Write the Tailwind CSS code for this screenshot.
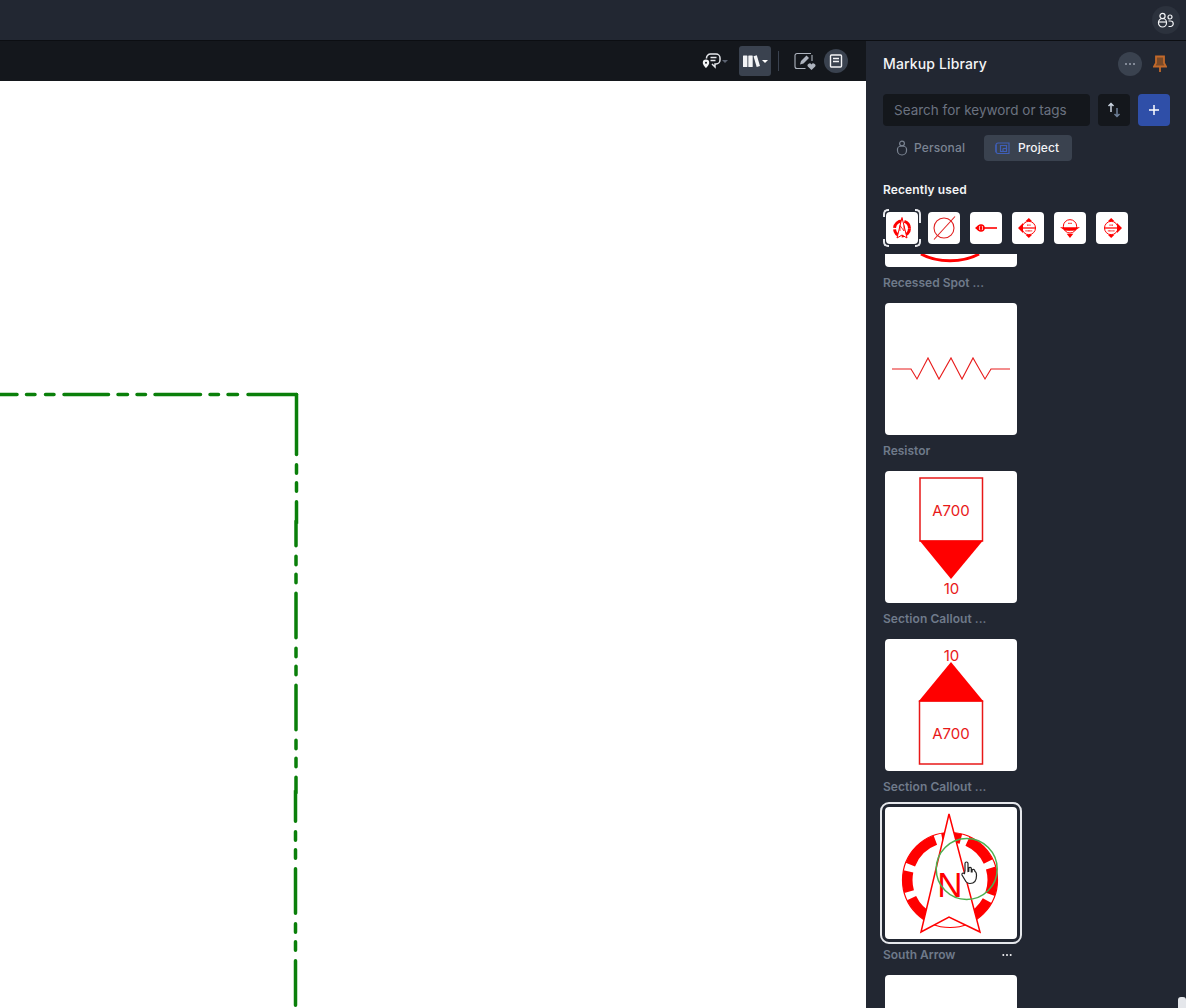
<!DOCTYPE html>
<html lang="en">
<head>
    <meta charset="UTF-8">
    <title>Markup Library</title>
    <script src="https://cdn.jsdelivr.net/npm/@tailwindcss/browser@4"></script>
</head>
<body class="h-[1008px] w-[1186px] overflow-hidden bg-white font-['Inter',sans-serif]">
    <!-- top bar -->
    <div class="flex h-[41px] items-center justify-end border-b border-[#0c0e12] bg-[#222732] pr-[6px]">
        <div class="flex h-[28px] w-[28px] items-center justify-center rounded-full bg-[#2c323d]">
            <svg width="18" height="16" viewBox="0 0 18 16" fill="none" stroke="#f3f4f6" stroke-width="1.2">
                <circle cx="5.5" cy="4" r="2.6"/>
                <path d="M1.5 10.5a4 4 0 0 1 8 0v.5a4 4 0 0 1-8 0z"/>
                <path d="M1.5 10h8" />
                <circle cx="13" cy="5" r="2"/>
                <path d="M11.5 9h2a2.5 2.5 0 0 1 0 5.5h-2"/>
            </svg>
        </div>
    </div>

    <div class="flex h-[967px]">
        <!-- viewer -->
        <div class="flex w-[866px] flex-col">
            <div class="flex h-[40px] items-center justify-end bg-[#14171c]">
                <svg width="19" height="16" viewBox="0 0 19 16" fill="none" class="mr-[1px]">
                    <path d="M4.500 5.500V5a4 4 0 0 1 4-4h5.500a4 4 0 0 1 4 4v2a4 4 0 0 1-4 4h-1v3l-3-3" stroke="#e5e7eb" stroke-width="1.500"/>
                    <path d="M8.500 4.500h6M8.500 7.500h5" stroke="#e5e7eb" stroke-width="1.400"/>
                    <path d="M4 6.500a3.200 3.200 0 0 1 3.200 3.200C7.200 12 4 15 4 15S.8 12 .8 9.700A3.200 3.200 0 0 1 4 6.500z" fill="#f3f4f6"/>
                    <circle cx="4" cy="9.700" r="1" fill="#14171c"/>
                </svg>
                <span class="mr-[11px] h-0 w-0 border-x-[3px] border-t-[3px] border-x-transparent border-t-[#5b6270]"></span>
                <div class="mr-[7px] flex h-[30px] w-[32px] items-center justify-center gap-[2px] rounded-[3px] bg-[#3a424f]">
                    <svg width="17" height="12" viewBox="0 0 17 12" fill="#f3f4f6">
                        <rect x="0" y="0.500" width="4.400" height="11.500" rx="0.500"/>
                        <rect x="5.300" y="0.500" width="4.400" height="11.500" rx="0.500"/>
                        <path d="M10.500 1.200l3.300-.9 3.200 10.700-3.300.9z"/>
                    </svg>
                    <span class="h-0 w-0 border-x-[3px] border-t-[3px] border-x-transparent border-t-white"></span>
                </div>
                <span class="mr-[15px] h-[20px] w-px bg-[#3a424f]"></span>
                <svg width="22" height="19" viewBox="0 0 22 19" fill="none" class="mr-[8px]">
                    <path d="M17 1.500H3a2 2 0 0 0-2 2v11a2 2 0 0 0 2 2h8.500M18 3v6" stroke="#aeb4be" stroke-width="1.100"/>
                    <path d="M6 12.500l1-3.500 5.500-5.500 2.500 2.500-5.500 5.500z" fill="#aeb4be"/>
                    <path d="M17.500 18l-3.700-3.500a2.100 2.100 0 0 1 3.700-2 2.100 2.100 0 0 1 3.700 2z" fill="#aeb4be"/>
                </svg>
                <div class="mr-[18px] flex h-[24px] w-[24px] items-center justify-center rounded-full bg-[#3a424f]">
                    <svg width="14" height="14" viewBox="0 0 14 14" fill="none" stroke="#f3f4f6" stroke-width="1.400">
                        <rect x="1.500" y="1" width="11" height="12" rx="1"/>
                        <path d="M4 4.500h6M4 7.500h6"/>
                    </svg>
                </div>
            </div>
            <!-- drawing -->
            <svg width="866" height="927" viewBox="0 81 866 927" fill="none" stroke="#0a7f0a" stroke-width="3.500" stroke-linecap="round">
                <path d="M296.500 394.500H0" stroke-dasharray="48.500 10.500 9.500 9.500 8.500 9.500 45.500 9.500 8.500 9.500 9.500 9.500 44.500 10 8.500 10.500 8.500 9.500 20"/>
                <path d="M296.500 394.500V454.500"/>
                <path d="M296.500 464.750L296.500 522L296 522L296 792L295.500 792L295.500 1010" stroke-dasharray="8.500 9.500 8.500 10.500 44.500 10.500"/>
            </svg>
        </div>

        <!-- markup library panel -->
        <div class="relative flex w-[320px] flex-col bg-[#222732] text-white">
            <div class="flex h-[46px] items-center pl-[17px] pr-[19px]">
                <h2 class="flex-1 text-[14px] leading-5 font-medium tracking-[0.01em] text-[#f3f4f6]">Markup Library</h2>
                <div class="mr-[11px] flex h-[24px] w-[24px] items-center justify-center rounded-full bg-[#3a424f]">
                    <svg width="10" height="2" viewBox="0 0 10 2" fill="#9ca3af"><circle cx="1" cy="1" r="1"/><circle cx="5" cy="1" r="1"/><circle cx="9" cy="1" r="1"/></svg>
                </div>
                <svg width="14" height="18" viewBox="0 0 14 18" fill="none" stroke="#c2692a" stroke-width="1.800">
                    <path d="M3 1.500h8v6.500l2 3.500H1l2-3.500z" fill="#7a4a28"/>
                    <path d="M7 11.500v5.500"/>
                </svg>
            </div>
            <div class="mt-[7px] flex gap-[8px] pl-[17px]">
                <div class="flex h-[32px] w-[207px] items-center rounded-[4px] bg-[#14171c] pl-[11px] text-[13.5px] text-[#6b7280]">Search for keyword or tags</div>
                <div class="flex h-[32px] w-[32px] items-center justify-center rounded-[4px] bg-[#14171c]">
                    <svg width="14" height="16" viewBox="0 0 14 16" fill="none" stroke-width="1.500">
                        <path d="M4 10V1.500M1.500 4L4 1.500 6.500 4" stroke="#cbd5e1"/>
                        <path d="M10 6v8.500M7.500 12l2.500 2.500 2.500-2.500" stroke="#6f8199"/>
                    </svg>
                </div>
                <div class="flex h-[32px] w-[32px] items-center justify-center rounded-[4px] bg-[#2f4fa8]">
                    <svg width="10" height="10" viewBox="0 0 10 10" stroke="#fff" stroke-width="1.500"><path d="M5 0v10M0 5h10"/></svg>
                </div>
            </div>
            <div class="mt-[9px] flex gap-[9px] pl-[18px]">
                <div class="flex h-[26px] w-[91px] items-center gap-[6px] pl-[12px] text-[12px] font-medium tracking-[0.01em] text-[#7b8492]">
                    <svg width="12" height="16" viewBox="0 0 12 16" fill="none" stroke="#7b8492" stroke-width="1.200">
                        <circle cx="6" cy="3.500" r="2.400"/>
                        <path d="M1.500 9a4.500 3 0 0 1 9 0v1.500a4.500 4.500 0 0 1-9 0z"/>
                    </svg>
                    Personal
                </div>
                <div class="flex h-[26px] w-[88px] items-center gap-[8px] rounded-[4px] bg-[#3a424f] pl-[11px] text-[12px] font-medium tracking-[0.01em] text-[#f3f4f6]">
                    <svg width="15" height="13" viewBox="0 0 15 13" fill="none" stroke="#3f5fb8" stroke-width="1.200">
                        <path d="M1 3A2 2 0 0 1 3 1h11v10.500H3a2 2 0 0 1-2-2z"/>
                        <path d="M1 3v7M5.500 3.500h6v6h-6zM8 6.500h3.500M8 6.500v3"/>
                    </svg>
                    Project
                </div>
            </div>
            <div class="mt-[21px] pl-[17px] text-[12px] leading-4 font-semibold tracking-[0.01em] text-[#f3f4f6]">Recently used</div>

            <!-- recently used thumbs -->
            <div class="relative mt-[14px] flex gap-[10px] pl-[20px]">
                <span class="absolute top-[-3px] left-[17px] h-[8px] w-[6px] rounded-tl-[5px] border-t-2 border-l-2 border-[#e5e7eb]"></span>
                <span class="absolute bottom-[-3px] left-[17px] h-[8px] w-[6px] rounded-bl-[5px] border-b-2 border-l-2 border-[#e5e7eb]"></span>
                <span class="absolute top-[-3px] left-[49px] h-[14px] w-[6px] rounded-tr-[5px] border-t-2 border-r-2 border-[#e5e7eb]"></span>
                <span class="absolute bottom-[-3px] left-[49px] h-[8px] w-[6px] rounded-br-[5px] border-r-2 border-b-2 border-[#e5e7eb]"></span>
                <div class="flex h-[32px] w-[32px] items-center justify-center rounded-[4px] bg-white">
                    <svg width="22" height="24" viewBox="0 0 22 24" fill="none" stroke="#f00">
                        <circle cx="11" cy="12.500" r="7.500" stroke-width="3" stroke-dasharray="12 1.500 9 1.500 12 1.500 9 1.500"/>
                        <path d="M11 1.500L6 22 11 19l5 3z" fill="#fff" stroke-width="1"/>
                        <path d="M9 15V9.500l4 5.500V9.500" stroke-width="0.800"/>
                    </svg>
                </div>
                <div class="flex h-[32px] w-[32px] items-center justify-center rounded-[4px] bg-white">
                    <svg width="26" height="26" viewBox="0 0 26 26" fill="none" stroke="#e02020" stroke-width="1.100">
                        <circle cx="13" cy="13" r="10"/>
                        <path d="M3 24.500L24 1.500"/>
                    </svg>
                </div>
                <div class="flex h-[32px] w-[32px] items-center justify-center rounded-[4px] bg-white">
                    <svg width="22" height="10" viewBox="0 0 22 10" fill="none" stroke="#f00">
                        <circle cx="6" cy="5" r="3" stroke-width="1.500"/>
                        <path d="M0 5l3.500-3v6zM6 1.500l1.500 3.500H4.500zM6 8.500L7.500 5H4.500z" fill="#f00" stroke="none"/>
                        <path d="M8 5h14" stroke-width="1.600"/>
                    </svg>
                </div>
                <div class="flex h-[32px] w-[32px] items-center justify-center rounded-[4px] bg-white">
                    <svg width="20" height="20" viewBox="0 0 24 24" fill="none" stroke="#f00">
                        <path d="M0 12l6-6v12zM13 0L9 4h8zM13 24l-4-4h8z" fill="#f00" stroke="none"/>
                        <circle cx="13" cy="12" r="8" stroke-width="1.200"/>
                        <path d="M4 12h17" stroke-width="1.500"/>
                        <path d="M9 15.500h8M11 8.500h4" stroke-width="1.500" stroke-dasharray="1 0.500"/>
                    </svg>
                </div>
                <div class="flex h-[32px] w-[32px] items-center justify-center rounded-[4px] bg-white">
                    <svg width="20" height="20" viewBox="0 0 24 24" fill="none" stroke="#f00">
                        <path d="M0 11h24l-6 4H6zM12 24l-4-5h8z" fill="#f00" stroke="none"/>
                        <circle cx="12" cy="10" r="8" stroke-width="1.200"/>
                        <path d="M8 14.500h8M10 6.500h4" stroke-width="1.500" stroke-dasharray="1 0.500"/>
                    </svg>
                </div>
                <div class="flex h-[32px] w-[32px] items-center justify-center rounded-[4px] bg-white">
                    <svg width="20" height="20" viewBox="0 0 24 24" fill="none" stroke="#f00">
                        <path d="M24 12l-6-6v12zM11 0L7 4h8zM11 24l-4-4h8z" fill="#f00" stroke="none"/>
                        <circle cx="11" cy="12" r="8" stroke-width="1.200"/>
                        <path d="M3 12h17" stroke-width="1.500"/>
                        <path d="M7 15.500h8M9 8.500h4" stroke-width="1.500" stroke-dasharray="1 0.500"/>
                    </svg>
                </div>
            </div>

            <!-- library list -->
            <div class="mt-[10px] min-h-0 flex-1 overflow-hidden pl-[19px]">
                <div class="mt-[-119px] h-[132px] w-[132px] overflow-hidden rounded-[4px] bg-white">
                    <svg width="132" height="132" viewBox="0 0 132 132" fill="none">
                        <path d="M36 119c16 9 42 9 58 0" stroke="#f00" stroke-width="3"/>
                    </svg>
                </div>
                <div class="mt-[8px] h-[28px] -ml-[2px] text-[12px] leading-[16px] font-semibold text-[#6f7a8a]">Recessed Spot ...</div>

                <div class="h-[132px] w-[132px] rounded-[4px] bg-white">
                    <svg width="132" height="132" viewBox="0 0 132 132" fill="none" stroke="#e81c1c" stroke-width="1.100">
                        <path d="M7 66H26L32 76 43 55 54 76 66 55 77 76 88 55 100 76 106 66H125"/>
                    </svg>
                </div>
                <div class="mt-[8px] h-[28px] -ml-[2px] text-[12px] leading-[16px] font-semibold text-[#6f7a8a]">Resistor</div>

                <div class="h-[132px] w-[132px] rounded-[4px] bg-white">
                    <svg width="132" height="132" viewBox="0 0 132 132">
                        <rect x="35" y="7" width="62.500" height="63" fill="none" stroke="#e81818" stroke-width="1.500"/>
                        <path d="M34.500 69.500H98L66 108z" fill="#f00"/>
                        <text x="66" y="45" text-anchor="middle" font-size="15" fill="#e81818" font-family="Inter, sans-serif">A700</text>
                        <text x="66.500" y="123" text-anchor="middle" font-size="15" fill="#e81818" font-family="Inter, sans-serif">10</text>
                    </svg>
                </div>
                <div class="mt-[8px] h-[28px] -ml-[2px] text-[12px] leading-[16px] font-semibold tracking-[0.005em] text-[#6f7a8a]">Section Callout ...</div>

                <div class="h-[132px] w-[132px] rounded-[4px] bg-white">
                    <svg width="132" height="132" viewBox="0 0 132 132">
                        <rect x="34.500" y="62" width="63" height="63" fill="none" stroke="#e81818" stroke-width="1.500"/>
                        <path d="M33.500 62.500H98.500L66 23z" fill="#f00"/>
                        <text x="66" y="100" text-anchor="middle" font-size="15" fill="#e81818" font-family="Inter, sans-serif">A700</text>
                        <text x="66.500" y="22" text-anchor="middle" font-size="15" fill="#e81818" font-family="Inter, sans-serif">10</text>
                    </svg>
                </div>
                <div class="mt-[8px] h-[28px] -ml-[2px] text-[12px] leading-[16px] font-semibold tracking-[0.005em] text-[#6f7a8a]">Section Callout ...</div>

                <!-- selected card -->
                <div class="relative h-[132px] w-[132px] rounded-[4px] bg-white outline-2 outline-offset-[3px] outline-[#e5e7eb]">
                    <svg width="132" height="132" viewBox="0 0 132 132" fill="none">
                        <circle cx="65" cy="73" r="42.500" stroke="#f00" stroke-width="10" stroke-dasharray="14.500 7 27 37 29 7 20.500 7 36 7 19 7 29.400 7 12.800"/>
                        <circle cx="65" cy="73" r="47.500" stroke="#f00" stroke-width="1.200"/>
                        <path d="M64 7L36 125 64 110 95 125z" fill="#fff" stroke="#f00" stroke-width="1.500"/>
                        <text x="65" y="90" text-anchor="middle" font-size="35" fill="#f00" font-family="'Liberation Sans', sans-serif">N</text>
                        <circle cx="81.700" cy="62" r="30.500" stroke="#4caf50" stroke-width="1.500"/>
                        <path d="M80 63.500V64l0-7.500a1.500 1.500 0 0 1 3 0v8l.8-.2V61a1.500 1.500 0 0 1 2.500 0v4l.8 0V63a1.500 1.500 0 0 1 2.400 0l.5 1.500c1.500.5 1.500 2 1.500 4 0 5-2.500 8-6.500 8-3 0-4-1.500-5-3.500l-3-5c-.5-1.500 1-2.500 2.500-1.500z" fill="#fff" stroke="#222" stroke-width="1.200"/>
                    </svg>
                </div>
                <div class="mt-[8px] flex h-[28px] -ml-[2px] w-[129px] justify-between text-[12px] leading-[16px] font-semibold text-[#6f7a8a]">
                    South Arrow
                    <svg width="10" height="16" viewBox="0 0 10 16" fill="#f3f4f6"><circle cx="1.300" cy="8" r="1"/><circle cx="5" cy="8" r="1"/><circle cx="8.700" cy="8" r="1"/></svg>
                </div>

                <div class="h-[132px] w-[132px] rounded-[4px] bg-white"></div>
            </div>

            <!-- scrollbar thumb -->
            <div class="absolute right-0 bottom-0 h-[11px] w-[8px] rounded-t-[3px] bg-[#e5e7eb]"></div>
        </div>
    </div>
</body>
</html>
